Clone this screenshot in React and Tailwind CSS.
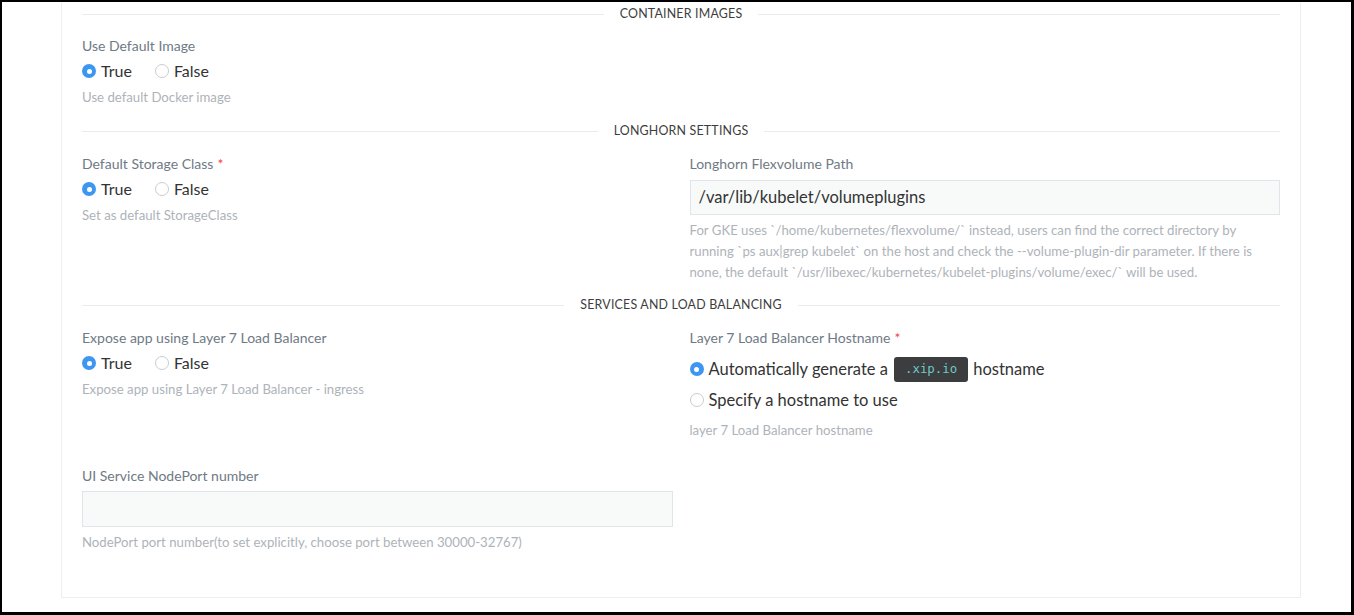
import React from 'react';

const font = { fontFamily: 'Lato, "Open Sans", sans-serif' };

function SectionHeader({ title, className = '' }) {
  return (
    <div className={`flex items-center h-[22px] ${className}`}>
      <div className="flex-1 h-px bg-[#e9ecee]" />
      <div className="px-[16px] text-[12.4px] text-[#3d3d3d] tracking-[0.2px]">{title}</div>
      <div className="flex-1 h-px bg-[#e9ecee]" />
    </div>
  );
}

function Label({ children, required }) {
  return (
    <div className="h-5 leading-5 text-[14px] text-[#6f7a85]">
      {children}
      {required && <span className="ml-1 text-[#ef4444]">*</span>}
    </div>
  );
}

function Radio({ checked }) {
  return checked ? (
    <span className="w-[14px] h-[14px] rounded-full bg-[#3d97f2] flex items-center justify-center shrink-0">
      <span className="w-[5px] h-[5px] rounded-full bg-white" />
    </span>
  ) : (
    <span className="w-[14px] h-[14px] rounded-full border border-[#c9cccf] bg-white shrink-0" />
  );
}

function BoolRadios() {
  return (
    <div className="mt-1 h-[22px] flex items-center text-[16px] text-[#333]">
      <Radio checked />
      <span className="ml-[5px]">True</span>
      <span className="ml-[23px]" />
      <Radio />
      <span className="ml-[5px]">False</span>
    </div>
  );
}

function Help({ children, className = 'mt-[5px]' }) {
  return <div className={`${className} leading-[21px] text-[13.2px] text-[#aeb3b9]`}>{children}</div>;
}

export default function App() {
  return (
    <div
      style={font}
      className="w-[1354px] h-[615px] overflow-hidden bg-white border-l-2 border-t-2 border-r-[3px] border-b-[3px] border-black"
    >
      <div className="ml-[59px] w-[1240px] border-x border-b border-[#eceff1] px-5 pb-[44px]">
        <SectionHeader title="CONTAINER IMAGES" className="mt-px" />
        <div className="mt-[11px]">
          <Label>Use Default Image</Label>
          <BoolRadios />
          <Help>Use default Docker image</Help>
        </div>

        <SectionHeader title="LONGHORN SETTINGS" className="mt-3" />
        <div className="mt-3 grid grid-cols-2 gap-x-[17px]">
          <div>
            <Label required>Default Storage Class</Label>
            <BoolRadios />
            <Help>Set as default StorageClass</Help>
          </div>
          <div>
            <Label>Longhorn Flexvolume Path</Label>
            <div className="mt-[6px] h-[35px] border border-[#dfe5e8] bg-[#f8fafa] px-[8px] flex items-center text-[16.5px] text-[#333]">
              /var/lib/kubelet/volumeplugins
            </div>
            <Help>
              <div className="whitespace-nowrap">For GKE uses `/home/kubernetes/flexvolume/` instead, users can find the correct directory by</div>
              <div className="whitespace-nowrap">running `ps aux|grep kubelet` on the host and check the --volume-plugin-dir parameter. If there is</div>
              <div className="whitespace-nowrap">none, the default `/usr/libexec/kubernetes/kubelet-plugins/volume/exec/` will be used.</div>
            </Help>
          </div>
        </div>

        <SectionHeader title="SERVICES AND LOAD BALANCING" className="mt-[11px]" />
        <div className="mt-3 grid grid-cols-2 gap-x-[17px]">
          <div>
            <Label>Expose app using Layer 7 Load Balancer</Label>
            <BoolRadios />
            <Help>Expose app using Layer 7 Load Balancer - ingress</Help>
          </div>
          <div>
            <Label required>Layer 7 Load Balancer Hostname</Label>
            <div className="mt-2 h-[26px] flex items-center text-[16.5px] text-[#333]">
              <Radio checked />
              <span className="ml-[5px]">Automatically generate a</span>
              <code
                style={{ fontFamily: '"DejaVu Sans Mono", "Liberation Mono", monospace' }}
                className="ml-[6px] mr-[5px] h-[25px] px-[11px] rounded-[3px] bg-[#3b3d3f] text-[#70c9c9] text-[12.4px] flex items-center"
              >
                .xip.io
              </code>
              <span>hostname</span>
            </div>
            <div className="mt-[7px] h-[22px] flex items-center text-[16.5px] text-[#333]">
              <Radio />
              <span className="ml-[5px]">Specify a hostname to use</span>
            </div>
            <Help className="mt-[9px]">layer 7 Load Balancer hostname</Help>
          </div>
        </div>

        <div className="mt-[25px] grid grid-cols-2 gap-x-[17px]">
          <div>
            <Label>UI Service NodePort number</Label>
            <div className="mt-[5px] h-[36px] border border-[#dfe5e8] bg-[#f8fafa]" />
            <Help>NodePort port number(to set explicitly, choose port between 30000-32767)</Help>
          </div>
          <div />
        </div>
      </div>
    </div>
  );
}
